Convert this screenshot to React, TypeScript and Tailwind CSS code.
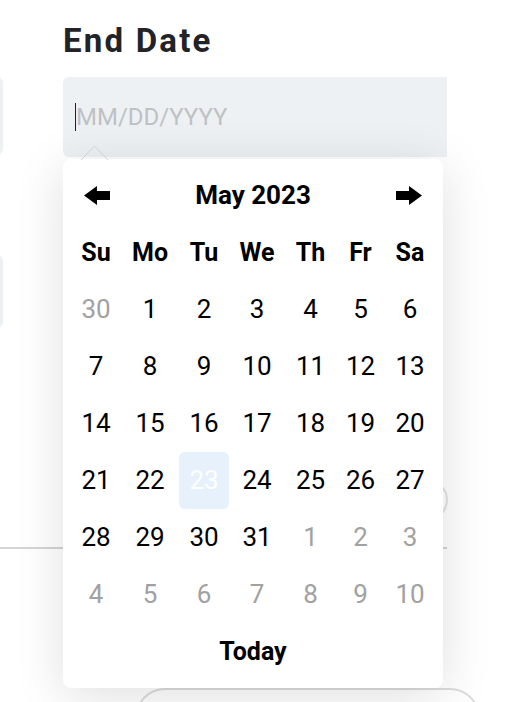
const weekDays = ["Su", "Mo", "Tu", "We", "Th", "Fr", "Sa"];

const weeks: { d: number; muted?: boolean; selected?: boolean }[][] = [
  [{ d: 30, muted: true }, { d: 1 }, { d: 2 }, { d: 3 }, { d: 4 }, { d: 5 }, { d: 6 }],
  [{ d: 7 }, { d: 8 }, { d: 9 }, { d: 10 }, { d: 11 }, { d: 12 }, { d: 13 }],
  [{ d: 14 }, { d: 15 }, { d: 16 }, { d: 17 }, { d: 18 }, { d: 19 }, { d: 20 }],
  [{ d: 21 }, { d: 22 }, { d: 23, selected: true }, { d: 24 }, { d: 25 }, { d: 26 }, { d: 27 }],
  [{ d: 28 }, { d: 29 }, { d: 30 }, { d: 31 }, { d: 1, muted: true }, { d: 2, muted: true }, { d: 3, muted: true }],
  [4, 5, 6, 7, 8, 9, 10].map((d) => ({ d, muted: true })),
];

const cols = "grid grid-cols-[54px_54px_54px_52px_55px_45px_54px]";

const Arrow = ({ flip = false }: { flip?: boolean }) => (
  <svg width="26" height="19" viewBox="0 0 26 19" className={flip ? "rotate-180" : ""}>
    <polygon points="0,9.5 13,0 13,5 26,5 26,14 13,14 13,19" fill="#000" />
  </svg>
);

const DatePicker = () => {
  return (
    <div className="absolute left-0 top-[82px] w-[380px] z-10">
      <svg width="30" height="16" viewBox="0 0 30 16" className="absolute left-[17px] -top-[14px]">
        <polyline points="1,15 14.5,1 28,15" fill="none" stroke="#d0d3d6" strokeWidth="1" />
      </svg>
      <div className="bg-white rounded-lg shadow-[0_8px_50px_rgba(0,0,0,0.13)] px-[6px] pt-[20px] pb-[20px]">
        <div className="flex items-center justify-between h-[32px] px-[15px]">
          <Arrow />
          <span className="text-[26px] font-bold text-black">May 2023</span>
          <Arrow flip />
        </div>
        <div className={`${cols} mt-[13px] h-[57px] items-center`}>
          {weekDays.map((w) => (
            <div key={w} className="flex justify-center text-[25px] font-bold text-black">
              {w}
            </div>
          ))}
        </div>
        {weeks.map((week, i) => (
          <div key={i} className={`${cols} h-[57px]`}>
            {week.map((c, j) => (
              <div key={j} className="flex justify-center items-center">
                <span
                  className={`w-[50px] h-[57px] flex items-center justify-center rounded-md text-[26px] ${
                    c.selected
                      ? "bg-[#e6f1fb] text-white"
                      : c.muted
                      ? "text-[#a1a1a1]"
                      : "text-black"
                  }`}
                >
                  {c.d}
                </span>
              </div>
            ))}
          </div>
        ))}
        <div className="mt-[13px] h-[32px] flex items-center justify-center text-[25px] font-bold text-black">
          Today
        </div>
      </div>
    </div>
  );
};

export default function App() {
  return (
    <div className="relative w-[514px] h-[702px] overflow-hidden bg-white font-['Roboto',sans-serif]">
      <div className="flex -ml-[197px] pt-[22px]">
        <div className="w-[200px] shrink-0 flex flex-col pt-[55px]">
          <div className="h-[78px] rounded-md bg-[#eef1f4]" />
          <div className="h-[73px] mt-[100px] rounded-md bg-[#eef1f4]" />
        </div>
        <div className="w-[384px] shrink-0 ml-[60px]">
          <div className="text-[33px] leading-[38px] font-bold tracking-[2.2px] text-[#222326]">End Date</div>
          <div className="relative mt-[17px]">
            <div className="h-[80px] rounded-l-md bg-[#edf1f4] flex items-center pl-[12px]">
              <span className="w-px h-[28px] bg-[#222]" />
              <span className="text-[24px] text-[#bfc1c3]">MM/DD/YYYY</span>
            </div>
            <DatePicker />
          </div>
          <div className="flex justify-end mt-[322px] -mr-[1px]">
            <div className="w-[42px] h-[42px] rounded-full border-2 border-[#e2e2e2]" />
          </div>
        </div>
      </div>
      <div className="w-[447px] h-[2px] bg-[#d4d4d4] mt-[26px]" />
      <div className="ml-[135px] mt-[139px] w-[345px] h-[60px] rounded-full border-2 border-[#dcdcdc]" />
    </div>
  );
}
